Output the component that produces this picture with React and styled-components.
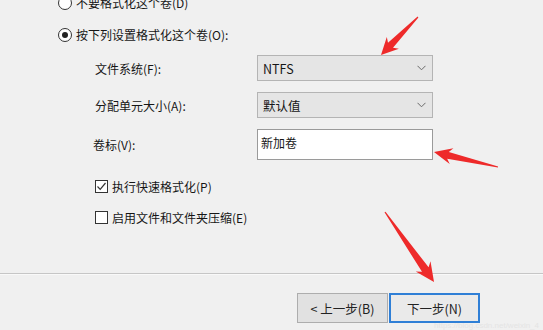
import React from "react";
import styled, { createGlobalStyle } from "styled-components";

const Global = createGlobalStyle`
  html, body { margin: 0; padding: 0; background: #f0f0f0; }
  body { font-family: "Noto Sans CJK SC", "Noto Sans", sans-serif; }
`;

const Page = styled.div`
  position: relative;
  width: 543px;
  height: 330px;
  overflow: hidden;
  background: #f0f0f0;
  color: #161616;
  font-size: 12px;
`;

const Content = styled.div`
  display: flex;
  flex-direction: column;
`;

const RadioRow = styled.label`
  display: flex;
  align-items: center;
  gap: 4px;
  height: 14px;
  padding-left: 58px;
  margin-top: ${(p) => p.$mt}px;
  line-height: 14px;
  white-space: nowrap;
`;

const RadioCircle = styled.span`
  box-sizing: border-box;
  width: 14px;
  height: 14px;
  border-radius: 50%;
  border: 1px solid #333;
  background: #fff;
  display: flex;
  align-items: center;
  justify-content: center;
  &::after {
    content: "";
    width: 6px;
    height: 6px;
    border-radius: 50%;
    background: ${(p) => (p.$checked ? "#222" : "transparent")};
  }
`;

const Fields = styled.div`
  display: grid;
  grid-template-columns: 164px 176px;
  grid-template-rows: 26px 26px 31px;
  row-gap: 11px;
  margin-top: 13px;
  padding-left: 93px;
`;

const Label = styled.div`
  display: flex;
  align-items: center;
  padding-left: ${(p) => p.$pl || 0}px;
  white-space: nowrap;
`;

const Select = styled.div`
  box-sizing: border-box;
  display: flex;
  align-items: center;
  justify-content: space-between;
  padding: 0 6px 0 5px;
  background: #e5e5e5;
  border: 1px solid #b4b4b4;
  font-size: 12.5px;
`;

const TextBox = styled.div`
  box-sizing: border-box;
  background: #fff;
  border: 1px solid #9a9a9a;
  padding: 5px 0 0 3px;
  line-height: 16px;
`;

const CheckRow = styled.label`
  display: flex;
  align-items: center;
  gap: 4px;
  height: 14px;
  padding-left: 95px;
  margin-top: ${(p) => p.$mt}px;
  white-space: nowrap;
`;

const CheckBox = styled.span`
  box-sizing: border-box;
  width: 13px;
  height: 13px;
  border: 1px solid #333;
  background: #fff;
  display: flex;
  align-items: center;
  justify-content: center;
`;

const Separator = styled.div`
  margin-top: 49px;
  height: 1px;
  background: #c6c6c6;
  border-bottom: 1px solid #f9f9f9;
`;

const Footer = styled.div`
  display: flex;
  gap: 1px;
  margin-top: 18px;
  padding-left: 297px;
`;

const Button = styled.button`
  box-sizing: border-box;
  width: 91px;
  height: 30px;
  font-family: inherit;
  font-size: 12.5px;
  color: #222;
  background: ${(p) => (p.$primary ? "#eaeaea" : "#e1e1e1")};
  border: ${(p) => (p.$primary ? "2px solid #2f7fd6" : "1px solid #adadad")};
  padding: 0;
  display: flex;
  align-items: center;
  justify-content: center;
`;

const Overlay = styled.svg`
  position: absolute;
  left: 0;
  top: 0;
  pointer-events: none;
`;

const Watermark = styled.div`
  position: absolute;
  right: 4px;
  bottom: 0;
  line-height: 9px;
  font-family: "Liberation Sans", sans-serif;
  font-size: 8px;
  color: #e4e4e4;
`;

function Chevron() {
  return (
    <svg width="9" height="6" viewBox="0 0 9 6">
      <polyline points="0.5,0.8 4.5,4.8 8.5,0.8" fill="none" stroke="#6a6a6a" strokeWidth="1" />
    </svg>
  );
}

function Check() {
  return (
    <svg width="11" height="11" viewBox="0 0 11 11">
      <polyline points="1.5,5.5 4.2,8.3 9.5,2" fill="none" stroke="#333" strokeWidth="1.2" />
    </svg>
  );
}

function arrowPoints(tail, tip, headLen, headHalf, neckHalf) {
  const dx = tip[0] - tail[0];
  const dy = tip[1] - tail[1];
  const len = Math.hypot(dx, dy);
  const ux = dx / len, uy = dy / len;
  const nx = -uy, ny = ux;
  const neck = [tip[0] - ux * headLen * 0.8, tip[1] - uy * headLen * 0.8];
  const base = [tip[0] - ux * headLen, tip[1] - uy * headLen];
  const pts = [
    [tail[0] + nx * 0.6, tail[1] + ny * 0.6],
    [neck[0] + nx * neckHalf, neck[1] + ny * neckHalf],
    [base[0] + nx * headHalf, base[1] + ny * headHalf],
    tip,
    [base[0] - nx * headHalf, base[1] - ny * headHalf],
    [neck[0] - nx * neckHalf, neck[1] - ny * neckHalf],
    [tail[0] - nx * 0.6, tail[1] - ny * 0.6],
  ];
  return pts.map((p) => p.map((v) => v.toFixed(1)).join(",")).join(" ");
}

const arrows = [
  { tail: [418, 17], tip: [381, 55], head: 17, half: 8.5, neck: 3.5 },
  { tail: [498, 167], tip: [434, 152], head: 18, half: 8, neck: 3.5 },
  { tail: [385, 212], tip: [434, 282], head: 19, half: 9, neck: 4 },
];

export default function App() {
  return (
    <>
      <Global />
      <Page>
        <Content>
          <RadioRow $mt={-4}>
            <RadioCircle />
            <span>不要格式化这个卷(D)</span>
          </RadioRow>
          <RadioRow $mt={18}>
            <RadioCircle $checked />
            <span>按下列设置格式化这个卷(O):</span>
          </RadioRow>
          <Fields>
            <Label $pl={2}>文件系统(F):</Label>
            <Select>
              <span>NTFS</span>
              <Chevron />
            </Select>
            <Label $pl={2}>分配单元大小(A):</Label>
            <Select>
              <span>默认值</span>
              <Chevron />
            </Select>
            <Label>卷标(V):</Label>
            <TextBox>新加卷</TextBox>
          </Fields>
          <CheckRow $mt={19}>
            <CheckBox>
              <Check />
            </CheckBox>
            <span>执行快速格式化(P)</span>
          </CheckRow>
          <CheckRow $mt={17}>
            <CheckBox />
            <span>启用文件和文件夹压缩(E)</span>
          </CheckRow>
          <Separator />
          <Footer>
            <Button>&lt; 上一步(B)</Button>
            <Button $primary>下一步(N)</Button>
          </Footer>
        </Content>
        <Overlay width="543" height="330" viewBox="0 0 543 330">
          {arrows.map((a, i) => (
            <polygon key={i} points={arrowPoints(a.tail, a.tip, a.head, a.half, a.neck)} fill="#ee2a2a" />
          ))}
        </Overlay>
        <Watermark>https://blog.csdn.net/weixin_4</Watermark>
      </Page>
    </>
  );
}
